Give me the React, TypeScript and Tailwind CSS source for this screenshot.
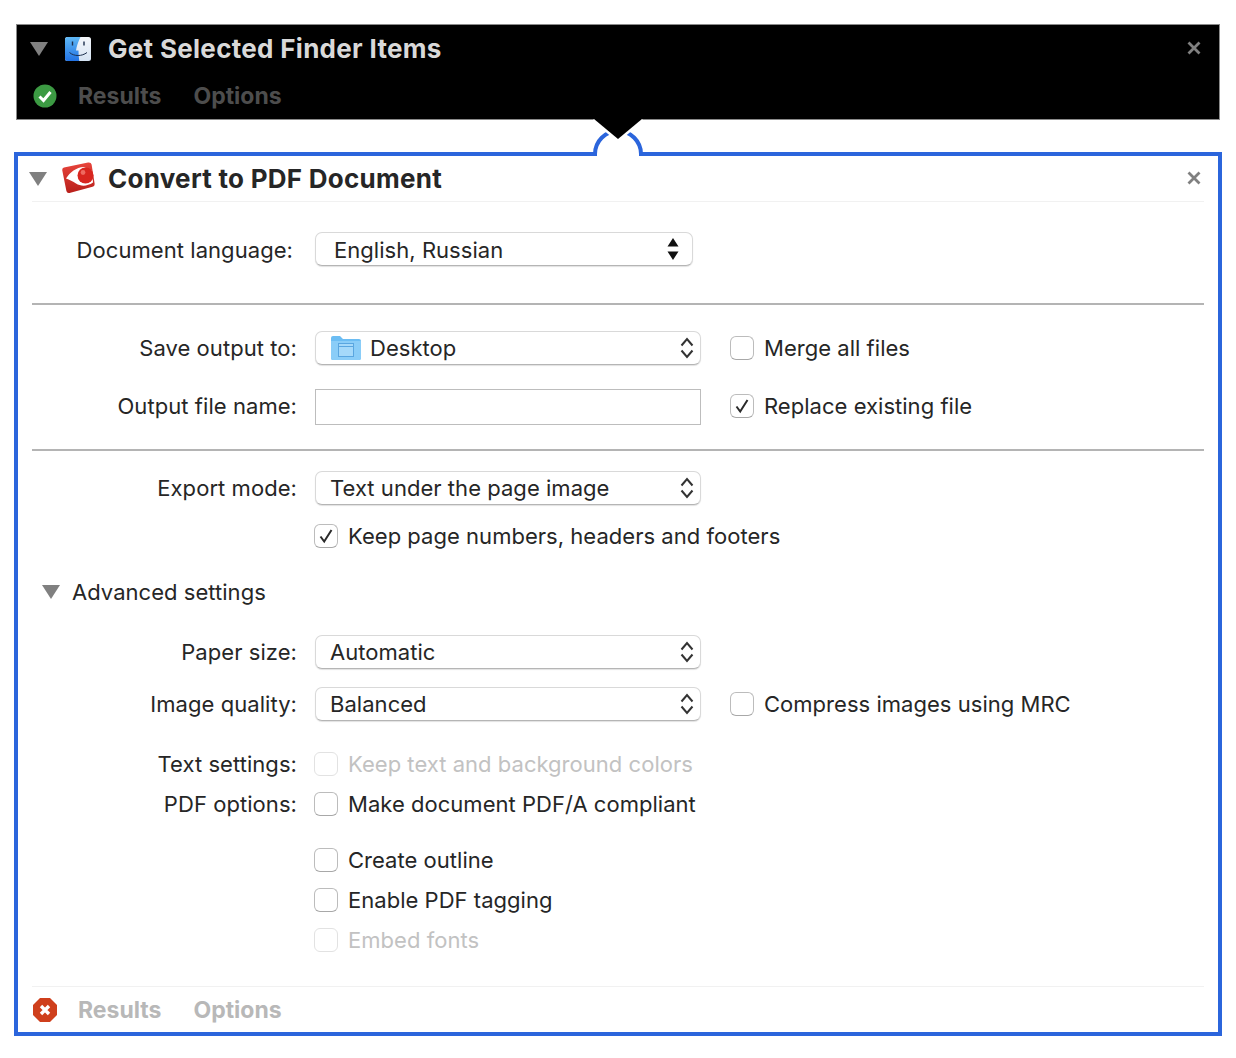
import React from 'react';

const font = 'font-["Inter","Liberation_Sans",sans-serif]';

const Disclosure = ({ className = '' }: { className?: string }) => (
  <svg width="18" height="14" viewBox="0 0 18 14" className={className}>
    <path d="M0 0H18L9 14Z" fill="#808080" />
  </svg>
);

const CloseX = () => (
  <svg width="14" height="14" viewBox="0 0 14 14" className="mb-[2px] shrink-0">
    <path d="M1.5 1.5L12.5 12.5M12.5 1.5L1.5 12.5" stroke="#808080" strokeWidth="2.8" />
  </svg>
);

const Chevrons = () => (
  <svg width="14" height="24" viewBox="0 0 14 24" className="shrink-0">
    <path
      d="M1.5 9.5L7 3L12.5 9.5M1.5 14.5L7 21L12.5 14.5"
      fill="none"
      stroke="#333"
      strokeWidth="2"
    />
  </svg>
);

const Arrows = () => (
  <svg width="12" height="24" viewBox="0 0 12 24" className="shrink-0">
    <path d="M6 1L11.5 9.5H0.5ZM6 23L0.5 14.5H11.5Z" fill="#111" />
  </svg>
);

const Select = ({
  text,
  width = 'w-[386px]',
  icon,
  stepper,
}: {
  text: string;
  width?: string;
  icon?: React.ReactNode;
  stepper?: boolean;
}) => (
  <div
    className={`${width} flex h-[34px] items-center rounded-[7px] border border-[#d9d9d9] border-b-[#b5b5b5] bg-white shadow-[0_1px_1px_rgba(0,0,0,0.12)] ${stepper ? 'pl-[18px] pr-[13px]' : 'pl-[14px] pr-[6px]'}`}
  >
    {icon}
    <span
      className={`flex-1 text-[22px] leading-none tracking-[0.04px] text-[#262626] ${stepper ? 'pt-[2px]' : ''}`}
    >
      {text}
    </span>
    {stepper ? <Arrows /> : <Chevrons />}
  </div>
);

const Checkbox = ({
  label,
  checked,
  disabled,
}: {
  label: string;
  checked?: boolean;
  disabled?: boolean;
}) => (
  <div className="flex h-6 items-center gap-[10px]">
    <div
      className={`flex h-6 w-6 shrink-0 items-center justify-center rounded-[6px] border bg-white ${disabled ? 'border-[#e2e2e2]' : 'border-[#bcbcbc] border-b-[#a8a8a8]'}`}
    >
      {checked && (
        <svg width="16" height="16" viewBox="0 0 16 16">
          <path d="M2.5 8.5L6.2 13.5L13.5 2" fill="none" stroke="#2a2a2a" strokeWidth="2" />
        </svg>
      )}
    </div>
    <span
      className={`whitespace-nowrap text-[22px] leading-none tracking-[0.03px] ${disabled ? 'text-[#c2c2c2]' : 'text-[#262626]'}`}
    >
      {label}
    </span>
  </div>
);

const Label = ({ text, className = 'pr-px' }: { text: string; className?: string }) => (
  <span
    className={`w-[266px] shrink-0 text-right text-[22px] leading-none tracking-[0.06px] text-[#262626] ${className}`}
  >
    {text}
  </span>
);

const Row = ({ className = '', children }: { className?: string; children: React.ReactNode }) => (
  <div className={`flex items-center ${className}`}>{children}</div>
);

const FinderIcon = () => (
  <svg width="26" height="24" viewBox="0 0 26 24" className="shrink-0">
    <defs>
      <linearGradient id="fl" x1="0" y1="0" x2="0" y2="1">
        <stop offset="0" stopColor="#5fb8f5" />
        <stop offset="1" stopColor="#2273e4" />
      </linearGradient>
      <linearGradient id="fr" x1="0" y1="0" x2="0" y2="1">
        <stop offset="0" stopColor="#f4f7fb" />
        <stop offset="1" stopColor="#d5e3f3" />
      </linearGradient>
    </defs>
    <rect width="26" height="24" rx="2.5" fill="url(#fr)" />
    <path
      d="M2.5 0H15.5C13 5 11.5 9.5 11 13.5H13.5C13.5 17 13.7 20.5 14.3 24H2.5A2.5 2.5 0 0 1 0 21.5V2.5A2.5 2.5 0 0 1 2.5 0Z"
      fill="url(#fl)"
    />
    <path d="M4.5 15.5C9 19.5 17 19.5 22 15.5" fill="none" stroke="#1d2f4d" strokeWidth="1" />
    <path d="M7.5 4.5V8.5M19 4.5V8.5" stroke="#1d2f4d" strokeWidth="1.4" />
  </svg>
);

const ReaderIcon = () => (
  <svg width="33" height="32" viewBox="0 0 33 32" className="shrink-0">
    <defs>
      <linearGradient id="rd" x1="0" y1="0" x2="0" y2="1">
        <stop offset="0" stopColor="#e8453c" />
        <stop offset="1" stopColor="#b81f1a" />
      </linearGradient>
    </defs>
    <path
      d="M2 5.6L26 0.5Q29 0 29.6 2.6L32.6 21.5Q33 24 30.5 24.8L7.5 31Q5 31.6 4.4 29L0.3 8.6Q-0.1 6.1 2 5.6Z"
      fill="url(#rd)"
    />
    <path
      d="M4 16.5C8 10 14 5.5 22 5L30 9L31 20.5C25 24.5 19 24.5 14 21.5C11 19.5 7.5 17.5 4 16.5Z"
      fill="#fff"
    />
    <circle cx="23.5" cy="13.5" r="8" fill="#d8261f" />
    <circle cx="21" cy="10.5" r="2.4" fill="#ee6a60" />
  </svg>
);

const FolderIcon = () => (
  <svg width="30" height="24" viewBox="0 0 30 24" className="mr-[9px] ml-px shrink-0">
    <path d="M0 2Q0 0 2 0H9L12 3H28Q30 3 30 5V22Q30 24 28 24H2Q0 24 0 22Z" fill="#6cbdf3" />
    <path d="M0 5H30V22Q30 24 28 24H2Q0 24 0 22Z" fill="#8acdf8" />
    <rect x="7.5" y="7.5" width="15" height="13" fill="#a5d9fa" stroke="#5aa6e0" />
    <path d="M7.5 10.5H22.5" stroke="#5aa6e0" />
  </svg>
);

const ActionTabs = ({ className }: { className: string }) => (
  <>
    <span className={`ml-[21px] text-[23px] font-bold leading-none ${className}`}>Results</span>
    <span className={`ml-[32px] text-[23px] font-bold leading-none ${className}`}>Options</span>
  </>
);

export default function App() {
  return (
    <div className={`h-[1058px] w-[1236px] overflow-hidden bg-white pt-6 ${font}`}>
      {/* source action */}
      <div className="mx-4 h-[96px] border border-[#8a8a8a] bg-black">
        <div className="flex h-[47px] items-center pl-[13px] pr-[18px] pt-[1px]">
          <Disclosure />
          <span className="ml-[17px]">
            <FinderIcon />
          </span>
          <h2 className="ml-[17px] flex-1 text-[26px] font-bold leading-none tracking-[0.3px] text-[#d9d9d9]">
            Get Selected Finder Items
          </h2>
          <CloseX />
        </div>
        <div className="flex h-[47px] items-center pl-[16px]">
          <svg width="24" height="24" viewBox="0 0 24 24" className="shrink-0">
            <circle cx="12" cy="12" r="11.5" fill="#3c9a43" />
            <path d="M6.5 12.5L10.5 16.5L17.5 8" fill="none" stroke="#fff" strokeWidth="3" />
          </svg>
          <ActionTabs className="pt-[2px] text-[#4d4d4d]" />
        </div>
      </div>

      {/* selected action */}
      <div className="relative mx-[14px] mt-8 h-[884px] border-4 border-[#2b65dc] bg-white px-[14px]">
        <svg
          width="60"
          height="40"
          viewBox="0 0 60 40"
          className="absolute left-[570px] top-[-37px]"
        >
          <rect x="9" y="33" width="42" height="4" fill="#fff" />
          <path d="M7 37V35A23 23 0 0 1 53 35V37" fill="none" stroke="#2b65dc" strokeWidth="4" />
          <path d="M6 0L30 20L54 0" fill="none" stroke="#fff" strokeWidth="5" />
          <path d="M6 0H54L30 20Z" fill="#000" />
        </svg>

        <div className="flex h-[46px] items-center border-b border-[#f1f1f1] pr-[3px] pt-[1px]">
          <Disclosure className="ml-[-3px]" />
          <span className="mb-[3px] ml-[15px]">
            <ReaderIcon />
          </span>
          <h2 className="ml-[13px] flex-1 text-[26px] font-bold leading-none tracking-[0.27px] text-[#262626]">
            Convert to PDF Document
          </h2>
          <CloseX />
        </div>

        <Row className="mt-[30px]">
          <Label text="Document language:" className="pr-[5px] pt-[2px]" />
          <div className="ml-[17px]">
            <Select text="English, Russian" width="w-[378px]" stepper />
          </div>
        </Row>

        <div className="mt-[37px] h-[2px] bg-[#b4b4b4]" />

        <Row className="mt-[26px]">
          <Label text="Save output to:" />
          <div className="ml-[17px]">
            <Select text="Desktop" icon={<FolderIcon />} />
          </div>
          <div className="ml-[29px]">
            <Checkbox label="Merge all files" />
          </div>
        </Row>

        <Row className="mt-[24px]">
          <Label text="Output file name:" className="pb-[2px] pr-px" />
          <div className="ml-[17px] h-[36px] w-[386px] border border-[#bdbdbd]" />
          <div className="mb-[2px] ml-[29px]">
            <Checkbox label="Replace existing file" checked />
          </div>
        </Row>

        <div className="mt-[24px] h-[2px] bg-[#b4b4b4]" />

        <Row className="mt-[20px]">
          <Label text="Export mode:" />
          <div className="ml-[17px]">
            <Select text="Text under the page image" />
          </div>
        </Row>

        <div className="ml-[282px] mt-[19px]">
          <Checkbox label="Keep page numbers, headers and footers" checked />
        </div>

        <div className="mt-[32px] flex h-6 items-center pl-[10px]">
          <Disclosure />
          <span className="ml-[12px] text-[22px] leading-none tracking-[0.04px] text-[#262626]">
            Advanced settings
          </span>
        </div>

        <Row className="mt-[31px]">
          <Label text="Paper size:" />
          <div className="ml-[17px]">
            <Select text="Automatic" />
          </div>
        </Row>

        <Row className="mt-[18px]">
          <Label text="Image quality:" />
          <div className="ml-[17px]">
            <Select text="Balanced" />
          </div>
          <div className="ml-[29px]">
            <Checkbox label="Compress images using MRC" />
          </div>
        </Row>

        <Row className="mt-[31px]">
          <Label text="Text settings:" />
          <div className="ml-[16px]">
            <Checkbox label="Keep text and background colors" disabled />
          </div>
        </Row>

        <Row className="mt-[16px]">
          <Label text="PDF options:" />
          <div className="ml-[16px]">
            <Checkbox label="Make document PDF/A compliant" />
          </div>
        </Row>

        <div className="ml-[282px] mt-[32px] flex flex-col gap-4">
          <Checkbox label="Create outline" />
          <Checkbox label="Enable PDF tagging" />
          <Checkbox label="Embed fonts" disabled />
        </div>

        <div className="mt-[34px] flex h-[46px] items-center border-t border-[#f1f1f1] pl-px pt-px">
          <svg width="24" height="24" viewBox="0 0 24 24" className="shrink-0">
            <path d="M7 0H17L24 7V17L17 24H7L0 17V7Z" fill="#cf3f1c" />
            <path d="M8 8L16 16M16 8L8 16" stroke="#fff" strokeWidth="3.4" />
          </svg>
          <ActionTabs className="text-[#b8b8b8]" />
        </div>
      </div>
    </div>
  );
}
